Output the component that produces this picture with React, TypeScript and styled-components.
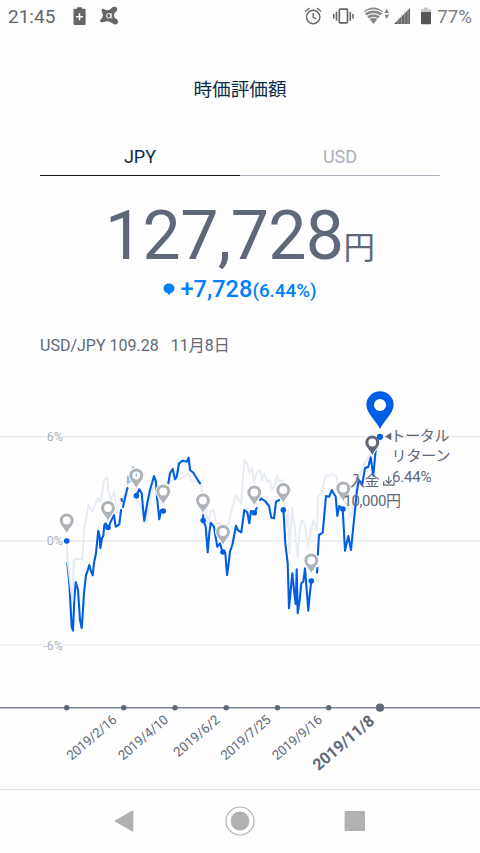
import React from 'react';
import styled, { createGlobalStyle } from 'styled-components';

const GlobalStyle = createGlobalStyle`
  * { box-sizing: border-box; }
  body { margin: 0; background: #fff; }
`;

const Screen = styled.div`
  width: 480px;
  height: 853px;
  display: flex;
  flex-direction: column;
  overflow: hidden;
  background: #fefefe;
  color: #5f6878;
  font-family: Roboto, 'Noto Sans CJK JP', sans-serif;
`;

const StatusBar = styled.header`
  height: 33px;
  flex: none;
  display: flex;
  align-items: center;
  justify-content: space-between;
  padding: 0 8px 0 8px;
  color: #666;
`;

const StatusGroup = styled.div`
  display: flex;
  align-items: center;
`;

const StatusText = styled.span<{ $size: number; $light?: boolean }>`
  font-size: ${(p) => p.$size}px;
  line-height: 32px;
  color: ${(p) => (p.$light ? '#808080' : '#666')};
`;

const StatusIcons = styled.svg`
  display: block;
  flex: none;
`;

const Title = styled.h1`
  margin: 0;
  height: 108px;
  flex: none;
  text-align: center;
  font-size: 18.6px;
  font-weight: 400;
  line-height: 114px;
  color: #0b2c48;
`;

const Tabs = styled.nav`
  display: flex;
  flex: none;
  height: 35px;
  margin: 0 40px;
`;

const Tab = styled.button<{ $active?: boolean }>`
  flex: 1;
  padding: 0 0 2px;
  border: 0;
  border-bottom: ${(p) => (p.$active ? '1.5px solid #14171c' : '1.5px solid #a9b1bd')};
  background: none;
  font: 400 18px/32px Roboto, sans-serif;
  color: ${(p) => (p.$active ? '#0b2c48' : '#a9b1bd')};
`;

const Amount = styled.div`
  flex: none;
  height: 100px;
  display: flex;
  justify-content: center;
  align-items: baseline;
  line-height: 120px;
`;

const AmountValue = styled.span`
  font-size: 68px;
  letter-spacing: -0.6px;
`;

const AmountUnit = styled.span`
  font-size: 31.5px;
`;

const Gain = styled.div`
  flex: none;
  height: 28px;
  display: flex;
  justify-content: center;
  align-items: baseline;
  font-weight: 500;
  color: #0080ff;
  line-height: 27px;
`;

const GainDot = styled.svg`
  width: 12px;
  height: 12px;
  margin: -2px 5px 0 0;
  align-self: center;
`;

const GainValue = styled.span`
  font-size: 23.6px;
`;

const GainRate = styled.span`
  font-size: 18.8px;
`;

const Rate = styled.div`
  flex: none;
  display: flex;
  gap: 12px;
  height: 76px;
  padding-left: 40px;
  font-size: 16px;
  line-height: 83px;
`;

const Chart = styled.svg`
  display: block;
  flex: none;
  font-family: Roboto, 'Noto Sans CJK JP', sans-serif;
`;

const NavBar = styled.footer`
  flex: 1;
  border-top: 1px solid #dedede;
`;

const GREY_LINE =
  '66.7,543 67.5,560 71,590 72,602 74,560 75,559 82.3,559 84,530 86.3,518 88.3,505 92.3,512 95,504 98,498 100.3,502 102.3,493 104,480 107.3,477 108.3,491 111,500 114.3,491 117,513 120.7,513 123,497 127,488 128,477 131,475 133,467 136,475 136.5,500 141,507 144,523 146.7,523 148,507 152,492 155,480 158,491 160,500 163,506 167.3,494 168.3,483 172.7,480 179,479 185,476 188.7,472.7 190,479 193.3,481.7 200.7,481.7 202,493 204,505 206.7,513 207.7,526 210.7,511 213.3,510 216.7,523 222,525 228.3,525 231.7,510 236,495 237.7,499 241.3,503 244.3,460 247.3,464 249.3,473 252,468 254,482 256.7,473 260,470 261.7,480 264.3,473 267.3,481.7 270,480 271.7,490 275,485 277.3,475 279.3,481.7 282.7,480 285,510 286.7,527 288.3,510 289.3,553 292.3,508 295,530 297.7,557 299.3,533 301.7,520 305,525 308.3,546.7 311,530 313.3,520 316.7,530 318.3,495 321.7,493 325,476.7 331.7,474.3 336.7,476.7 340,493 344,497 351,517 353.3,507 356.7,483 365,463 368.3,456.7 376,452 380,437';

const BLUE_LINES = [
  '67.3,563 69.3,583 71.7,627 73,630.7 74.3,600 75.7,582 78,590 80,620 81.7,628 83,610 84,593 86,575 87.3,571.7 89.3,565 90.7,570 92.7,575.3 94,563 96,553 98.3,530.7 99.7,537 100.3,548.3 102,538 103.3,536 104.3,525 105.7,523.3 108,529 110.7,521.7 114,515 115.7,526.7 119.3,524.3 121,510',
  '121.5,499 122,501',
  '123,507 125,498 127.5,488',
  '136.3,495.7 139.3,489.3 141.7,493.3 143,508 144.3,520.7 147.3,503 150,490 154,476 156,481.7 157,497 159.3,519.3 161,510 163.3,511',
  '168.3,483.3 170,473.3 172.7,469 175,479.3 176.7,476.7 179,463.3 182.7,460.7 186.7,461.7 188.7,457.7 190,470 193.3,472.7 197.3,479.3 200,483.3',
  '203,513 203.3,520.7 205.7,526.7 207.7,552.3 209.3,533.3 210.7,522.7 214,526.7 215.3,535 217.3,546.7 220,543.3 222.7,552.7 225.3,553 227,575 228.7,563.3 230,551.7 232.3,545 236,525.7 237.7,530 241.3,532.3 244.3,510 247.3,512.3 249.3,523.3 251,511 254.3,512.7 256.7,508',
  '260,500 261,498.3 265,501 269,506 271.3,517.7 274,518.3 276,501.7 279.3,500',
  '283.3,508 285.3,543.3 287.7,563.3 289,608.3 290.7,590 292.3,573.3 294,590 295.7,604 296.7,569.3 297.7,613.3 299.7,600 301.3,583.3 303.3,581.7 305,568.3 306.7,590 308.3,610.7 309.7,595 311.3,581',
  '317,572.7 317.4,568',
  '317.8,555 319,535 322.7,532.7 326,496 329.3,496.7 331.7,490 335.7,496.7 337.3,516 339.3,506 342.7,509 345,550.7 348.3,536 351,550 354,520 356.7,493 358.7,480 362.3,484 365,468.3 368.3,466.7 370.7,457.3 373.3,475.7 375.7,450 380,436.7',
];

const POINTS: [number, number][] = [
  [66.7, 541], [108, 527.5], [136.3, 495.7], [163.3, 511], [203.2, 520.5], [223, 552],
  [254.3, 512.7], [283.3, 510], [311.3, 581], [342.9, 509], [380, 436.7],
];

const PINS: [number, number][] = [
  [66.7, 520.5], [108, 508], [136.3, 475.5], [163.3, 491.5], [203, 500.5], [223, 532],
  [254.3, 492.5], [283.3, 490], [311.3, 560.5], [343.3, 488.5],
];

const TICKS = [66.7, 123.7, 175, 226.2, 277.5, 328.7];

const DATES: { x: number; label: string; width: number }[] = [
  { x: 117.8, label: '2019/2/16', width: 61 },
  { x: 169.3, label: '2019/4/10', width: 61 },
  { x: 220.8, label: '2019/6/2', width: 56 },
  { x: 271.8, label: '2019/7/25', width: 61 },
  { x: 323.3, label: '2019/9/16', width: 61 },
];

function Pin({ x, y, fill, scale = 1 }: { x: number; y: number; fill: string; scale?: number }) {
  return (
    <g transform={`translate(${x} ${y}) scale(${scale})`}>
      <path
        d="M0 12.4 C-1.5 8.6 -7 4.2 -7 0 A7 7 0 1 1 7 0 C7 4.2 1.5 8.6 0 12.4Z"
        fill={fill}
        stroke="#fefefe"
        strokeWidth={2 / scale}
        paintOrder="stroke"
      />
      <circle r={scale > 1 ? 3.1 : 3.9} fill="#fefefe" />
    </g>
  );
}

function PerformanceChart() {
  return (
    <Chart width="480" height="409" viewBox="0 380 480 409">
      <g stroke="#e9e9eb" strokeWidth="1.3">
        <path d="M0 436.7H480M0 541H480M0 645.2H480" />
      </g>
      <g fill="#a9b1bd" fontSize="12.4" textAnchor="end" stroke="#fefefe" strokeWidth="2" paintOrder="stroke">
        <text x="62.8" y="441">6%</text>
        <text x="62.8" y="545.3">0%</text>
        <text x="62.8" y="649.5">-6%</text>
      </g>
      <g fill="none" strokeLinejoin="round" strokeLinecap="round">
        <polyline points={GREY_LINE} stroke="#e7ebf4" strokeWidth="2" />
        <g stroke="#005ee6" strokeWidth="2.1">
          {BLUE_LINES.map((points) => (
            <polyline key={points} points={points} />
          ))}
        </g>
        <path d="M66.9 545L67.8 563L71 590L72.5 601L74 561" stroke="#e7ebf4" strokeWidth="1.8" />
        <path d="M128 483V476M130 482L131.5 474M133 467.5V467M136.3 471V480" stroke="#5c98ef" strokeWidth="1.3" />
      </g>
      {POINTS.map(([x, y]) => (
        <circle key={x} cx={x} cy={y} r="2.8" fill="#005ee6" />
      ))}
      {PINS.map(([x, y]) => (
        <Pin key={x} x={x} y={y} fill="#aeb3ba" />
      ))}
      <path d="M136.3 473.3V476.5" stroke="#8fb4ec" strokeWidth="1.2" />
      <Pin x={372.3} y={442.5} fill="#5f6878" />
      <Pin x={380} y={405} fill="#005ee6" scale={1.95} />
      <circle cx="380" cy="436.7" r="3" fill="#005ee6" />

      <path d="M385 436.5L391.3 432.6V440.2Z" fill="#5f6878" />
      <g fill="#5f6878" fontSize="15">
        <text x="390.5" y="440.5" textLength="59">トータル</text>
        <text x="391.5" y="461.3" textLength="59">リターン</text>
        <text x="392" y="482" textLength="39.5" fontSize="15">6.44%</text>
        <text x="350" y="485.5" textLength="29.5">入金</text>
        <text x="343.5" y="506" textLength="57.5">10,000円</text>
      </g>
      <path
        d="M383.7 481.5V485.2H394V481.5M388.7 476.5V483M385.7 480.3L388.7 483.2L391.7 480.3"
        fill="none"
        stroke="#5f6878"
        strokeWidth="1.2"
      />

      <path d="M0 707.7H480" stroke="#7c8492" strokeWidth="1.6" />
      <g fill="#5f6878">
        {TICKS.map((x) => (
          <circle key={x} cx={x} cy="707.7" r="2.7" />
        ))}
        <circle cx="380" cy="707.7" r="4.1" />
        {DATES.map(({ x, label, width }) => (
          <text
            key={label}
            transform={`translate(${x} 721.2) rotate(-40.5)`}
            textAnchor="end"
            fontSize="13.3"
            textLength={width}
          >
            {label}
          </text>
        ))}
        <text
          transform="translate(375.5 722.5) rotate(-40.5)"
          textAnchor="end"
          fontSize="16"
          fontWeight="700"
          textLength="75"
        >
          2019/11/8
        </text>
      </g>
    </Chart>
  );
}

export default function App() {
  return (
    <>
      <GlobalStyle />
      <Screen>
        <StatusBar>
          <StatusGroup>
            <StatusText $size={19}>21:45</StatusText>
            <StatusIcons width="65" height="33" viewBox="55 0 65 33">
              <path d="M74.7 8.8H77V7.2H82V8.8H84.6Q85.6 8.8 85.6 9.8V24Q85.6 25 84.6 25H74.5Q73.5 25 73.5 24V9.8Q73.5 8.8 74.7 8.8Z" fill="#666" />
              <path d="M79.5 13.2V20.2M76 16.7H83" stroke="#fff" strokeWidth="1.6" />
              <path
                d="M102 9Q103.5 8 105.5 10Q108 11 110.5 9.2Q112 6.8 114.5 6.8Q117.4 7 117.3 9.6Q117 11.6 114.8 12.7Q113.8 14 114 16Q114.5 17.8 116.2 19Q118.7 20.5 117.8 22.9Q116.2 25.4 113.6 24.1Q112.1 23 109.8 21.7Q107 20.9 103.7 21.9Q100.7 22.8 100 21.2Q99.7 19.7 101.8 18.3Q103.7 16.5 102.6 13.8Q101 10.7 102 9Z"
                fill="#666"
              />
              <circle cx="108.7" cy="15.8" r="2.2" fill="none" stroke="#fff" strokeWidth="1" />
              <path d="M111.1 13V17.5Q111.2 18.6 112.4 18.1" fill="none" stroke="#fff" strokeWidth="1" />
            </StatusIcons>
          </StatusGroup>
          <StatusGroup>
            <StatusIcons width="137" height="33" viewBox="300 0 137 33">
              <g fill="none" stroke="#666" strokeWidth="1.4">
                <circle cx="313.2" cy="17" r="6.7" />
                <path d="M313.2 12.8V17.3L316.3 19M305.3 11.5L309.5 8M316.9 8L321.1 11.5" />
                <rect x="339.3" y="9.2" width="8.2" height="13.7" rx="0.8" strokeWidth="1.7" />
                <path d="M336.5 11.7V20.7M333.8 14V18.5M350.3 11.7V20.7M353 14V18.5" strokeWidth="1.6" />
              </g>
              <path d="M373.5 24L363.7 11.7Q373.5 3.5 383.3 11.7Z" fill="#888" />
              <path d="M363.8 13.2Q373.5 6.5 383.2 13.2M366.5 16.1Q373.5 11.2 380.5 16.1M369 19Q373.5 16 378 19" fill="none" stroke="#fefefe" strokeWidth="1.1" />
              <path d="M386.7 8.8L389 13H384.4ZM386.7 19L389 14.7H384.4Z" fill="#808080" />
              <path d="M394 24L410 8V24Z" fill="#666" />
              <path d="M398.2 17V24M401.5 14V24M404.8 10V24M408 9V24" stroke="#bbb" strokeWidth="0.7" />
              <path d="M421 12V9.3H423.5V7.5H428V9.3H431V12Z" fill="#c6c6c6" />
              <path d="M421 12H431V23.3Q431 24.3 430 24.3H422Q421 24.3 421 23.3Z" fill="#555" />
            </StatusIcons>
            <StatusText $size={18.7} $light>77%</StatusText>
          </StatusGroup>
        </StatusBar>
        <Title>時価評価額</Title>
        <Tabs>
          <Tab $active>JPY</Tab>
          <Tab>USD</Tab>
        </Tabs>
        <Amount>
          <AmountValue>127,728</AmountValue>
          <AmountUnit>円</AmountUnit>
        </Amount>
        <Gain>
          <GainDot viewBox="0 0 12 12">
            <path d="M6 12L4.6 10.3C2 9.6.5 7.9.5 5.6C.5 2.5 3 .6 6 .6S11.5 2.5 11.5 5.6C11.5 7.9 10 9.6 7.4 10.3Z" fill="#0080ff" />
          </GainDot>
          <GainValue>+7,728</GainValue>
          <GainRate>(6.44%)</GainRate>
        </Gain>
        <Rate>
          <span>USD/JPY 109.28</span>
          <span>11月8日</span>
        </Rate>
        <PerformanceChart />
        <NavBar>
          <StatusIcons width="480" height="63" viewBox="0 790 480 63">
            <path d="M115.2 821L132.7 811V831Z" fill="#b1b1b1" stroke="#b1b1b1" strokeWidth="1.2" strokeLinejoin="round" />
            <circle cx="240" cy="821" r="9.4" fill="#b1b1b1" />
            <circle cx="240" cy="821" r="14" fill="none" stroke="#b1b1b1" strokeWidth="1.2" />
            <rect x="344.6" y="811" width="20.4" height="20" rx="1.3" fill="#b1b1b1" />
          </StatusIcons>
        </NavBar>
      </Screen>
    </>
  );
}
